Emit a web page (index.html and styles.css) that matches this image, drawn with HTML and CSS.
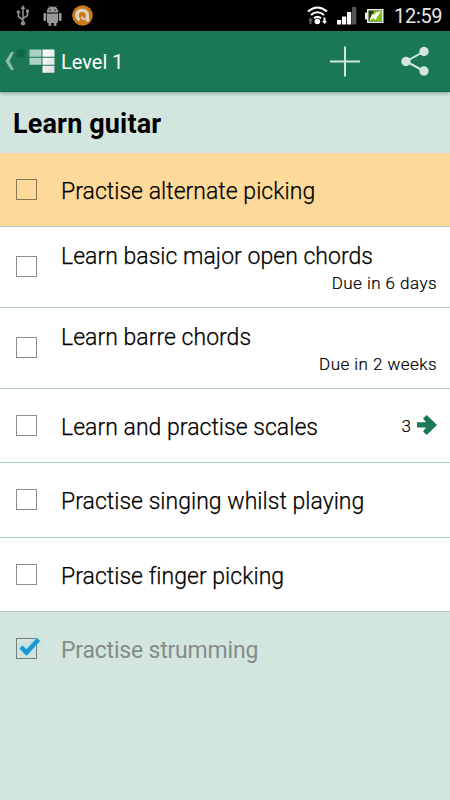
FILE: index.html
```
<!DOCTYPE html>
<html lang="en">

<head>
    <meta charset="UTF-8">
    <title>Level 1</title>
    <link rel="stylesheet" href="styles.css">
</head>

<body>
    <div class="status">
        <svg class="notify" width="100" height="31" viewBox="0 0 100 31">
            <!-- usb -->
            <g fill="none" stroke="#8c8c8c" stroke-width="1.6">
                <path d="M23 8v15M18.500 13v3.500l4.500 3.500M27.500 12v3.500l-4.500 3"></path>
            </g>
            <g fill="#8c8c8c">
                <path d="M23 5l2.500 4h-5zM26 9.500h3v3h-3z"></path>
                <circle cx="18.300" cy="12" r="1.700"></circle>
                <circle cx="23" cy="23.300" r="2.200"></circle>
            </g>
            <!-- android -->
            <g fill="#989898">
                <path d="M46.500 12.500a6 6 0 0 1 12 0z"></path>
                <path d="M47 13.500h11v8.500a1 1 0 0 1-1 1h-9a1 1 0 0 1-1-1z"></path>
                <rect x="43.500" y="13" width="2.700" height="8" rx="1.200"></rect>
                <rect x="58.800" y="13" width="2.700" height="8" rx="1.200"></rect>
                <rect x="48.500" y="21" width="2.800" height="5" rx="1.200"></rect>
                <rect x="53.700" y="21" width="2.800" height="5" rx="1.200"></rect>
                <path d="M48.500 6l1.500 2M56.500 6l-1.500 2" stroke="#989898"></path>
            </g>
            <circle cx="50" cy="10" r=".7" fill="#000"></circle>
            <circle cx="55" cy="10" r=".7" fill="#000"></circle>
            <!-- avast -->
            <circle cx="82.500" cy="15.500" r="10.300" fill="#c87a14"></circle>
            <path d="M79.800 20c-4-2-3.800-8 .4-9.300 4-1.200 7 .8 7.200 4.300v6.500" fill="none" stroke="#ddd2c4" stroke-width="3.400"></path>
            <path d="M85.500 18.500c-2 1.200-4 .2-3.500-2" fill="none" stroke="#ddd2c4" stroke-width="1.800"></path>
        </svg>
        <svg class="signals" width="84" height="31" viewBox="306 0 84 31">
            <g fill="none" stroke="#fff" stroke-width="2.100">
                <path d="M308 11.500q9.500-8 19 0M311 15q6.500-5.500 13 0M314 18.300q3.500-3 7 0"></path>
            </g>
            <circle cx="317.300" cy="21.500" r="2.800" fill="#fff"></circle>
            <path d="M310.500 17.500l2.500 3h-1.500v3.500h-2v-3.500h-1.500z" fill="#666"></path>
            <path d="M324.500 24l-2.500-3h1.500v-3.500h2v3.500h1.500z" fill="#fff"></path>
            <path d="M337 20h4.200v4.500h-4.200zM342 16.500h4.200v8h-4.200zM347 12h4.200v12.500h-4.200z" fill="#fff"></path>
            <path d="M352 7h4.300v17.500h-4.300z" fill="#555"></path>
            <path d="M367 9h16.500v14h-16.500v-3.500h-2v-7h2z" fill="#e8eee0"></path>
            <path d="M368.500 10.500h13.500v11h-13.500z" fill="#2c3a12"></path>
            <path d="M369 21l5-10h8v10z" fill="#80c010"></path>
            <path d="M381 11l-5 1.500-2 2.500-2-1-2.500 6.500 4-2.500 2 2z" fill="#fff"></path>
        </svg>
        <span class="clock">12:59</span>
    </div>

    <div class="bar">
        <svg class="up" width="58" height="60" viewBox="0 31 58 60">
            <defs>
                <linearGradient id="dark">
                    <stop offset="0" stop-color="#14694a"></stop>
                    <stop offset=".5" stop-color="#0d6344"></stop>
                    <stop offset="1" stop-color="#2b805f"></stop>
                </linearGradient>
                <linearGradient id="light" x2="1" y2="1">
                    <stop offset="0" stop-color="#fff"></stop>
                    <stop offset="1" stop-color="#ddd"></stop>
                </linearGradient>
            </defs>
            <path d="M11 52h3l-4.500 9.200 4.500 8.800h-3l-5.500-8.800z" fill="#8ebdaa"></path>
            <path d="M16.500 49.500h12.500v8h-12.500z" fill="url(#dark)"></path>
            <path d="M29.500 49.500h12v7.200h-12zM29.500 57.700h12v7h-12z" fill="#abd2c2"></path>
            <path d="M42.500 49.500h12v7.200h-12zM42.500 57.700h12v7h-12zM42.500 65.700h12v7h-12z" fill="url(#light)"></path>
        </svg>
        <span class="bar-title">Level 1</span>
        <svg class="actions" width="120" height="60" viewBox="330 31 120 60" fill="#d2e5de">
            <path d="M344 46.500h2v14h14v2h-14v14h-2v-14h-14v-2h14z"></path>
            <path d="M424 51.500l-18 10 18 9.500" fill="none" stroke="#d2e5de" stroke-width="2"></path>
            <circle cx="424" cy="51.500" r="4.700"></circle>
            <circle cx="406" cy="61.500" r="4.700"></circle>
            <circle cx="424" cy="71" r="4.700"></circle>
        </svg>
    </div>

    <h1 class="heading">Learn guitar</h1>

    <ul class="list">
        <li class="item cur">
            <span class="box"></span>
            <span class="name">Practise alternate picking</span>
        </li>
        <li class="item due">
            <span class="box"></span>
            <div class="info">
                <p class="name">Learn basic major open chords</p>
                <p class="date">Due in 6 days</p>
            </div>
        </li>
        <li class="item due">
            <span class="box"></span>
            <div class="info">
                <p class="name">Learn barre chords</p>
                <p class="date">Due in 2 weeks</p>
            </div>
        </li>
        <li class="item">
            <span class="box"></span>
            <span class="name">Learn and practise scales</span>
            <span class="count">3</span>
            <svg class="arrow" width="20" height="20" viewBox="0 0 20 20">
                <path d="M0 7.300h9l-3-3.900L9.700 0l10.300 10L9.700 20 6 16.400l3-3.900H0z" fill="#187b54"></path>
            </svg>
        </li>
        <li class="item tall">
            <span class="box"></span>
            <span class="name">Practise singing whilst playing</span>
        </li>
        <li class="item">
            <span class="box"></span>
            <span class="name">Practise finger picking</span>
        </li>
        <li class="item done">
            <span class="box">
                <svg class="tick" width="26" height="24" viewBox="0 0 26 24">
                    <path d="M5 11l5.500 5.500L22.500 3.500" fill="none" stroke="#1a98cf" stroke-width="4.400"></path>
                </svg>
            </span>
            <span class="name">Practise strumming</span>
        </li>
    </ul>
</body>

</html>
```
FILE: styles.css
```
body,
p,
ul,
h1 {
    margin: 0;
    padding: 0;
}

ul {
    list-style: none;
}

svg {
    display: block;
    flex: none;
}

body {
    height: 800px;
    overflow: hidden;
    background: #d2e5de;
    color: #000;
    font-family: Roboto, sans-serif;
}

.status {
    display: flex;
    height: 31px;
    background: #000;
}

.signals {
    margin-left: auto;
}

.clock {
    width: 60px;
    padding-left: 4px;
    box-sizing: border-box;
    color: #e6e6e6;
    font-size: 20px;
    line-height: 33px;
    letter-spacing: -.3px;
    white-space: nowrap;
}

.bar {
    display: flex;
    height: 60px;
    background: #1a7954;
    border-bottom: 1px solid #08704a;
    box-shadow: 0 1px 4px rgba(0, 0, 0, .35);
}

.bar-title {
    padding-left: 3px;
    color: #fff;
    font-size: 20px;
    line-height: 62px;
}

.actions {
    margin-left: auto;
}

.heading {
    height: 61px;
    padding-left: 13px;
    font-size: 27px;
    font-weight: 700;
    line-height: 65px;
    letter-spacing: .15px;
}

.item {
    display: flex;
    align-items: center;
    box-sizing: border-box;
    height: 74px;
    padding: 0 13px 0 16px;
    border-bottom: 1px solid #b5cac3;
    background: #fff;
}

.cur {
    background: #fdda9a;
}

.due {
    height: 81px;
}

.tall {
    height: 75px;
}

.done {
    border-color: transparent;
    background: none;
    color: #868c89;
}

.box {
    position: relative;
    flex: none;
    box-sizing: border-box;
    width: 21px;
    height: 21px;
    margin-right: 24px;
    border: 1px solid rgba(0, 0, 0, .45);
}

.due .box,
.tall .box {
    margin-bottom: 1px;
}

.tick {
    position: absolute;
    left: -1px;
    top: -3px;
    filter: drop-shadow(0 0 2px #8edcf5);
}

.name {
    padding-top: 4px;
    font-size: 23px;
    font-weight: 300;
    line-height: 30px;
    letter-spacing: .03px;
    white-space: nowrap;
    -webkit-text-stroke: .25px;
}

.done .name {
    font-weight: 400;
    letter-spacing: -.2px;
    -webkit-text-stroke: 0;
}

.info {
    flex: 1;
    padding-top: 3px;
}

.info .name {
    padding-top: 0;
}

.date {
    font-size: 17px;
    font-weight: 300;
    line-height: 23px;
    letter-spacing: .45px;
    text-align: right;
    -webkit-text-stroke: .2px;
}

.count {
    margin-left: auto;
    padding-right: 6px;
    font-size: 17px;
    font-weight: 300;
    -webkit-text-stroke: .2px;
}

.arrow {
    margin-bottom: 1px;
}
```
